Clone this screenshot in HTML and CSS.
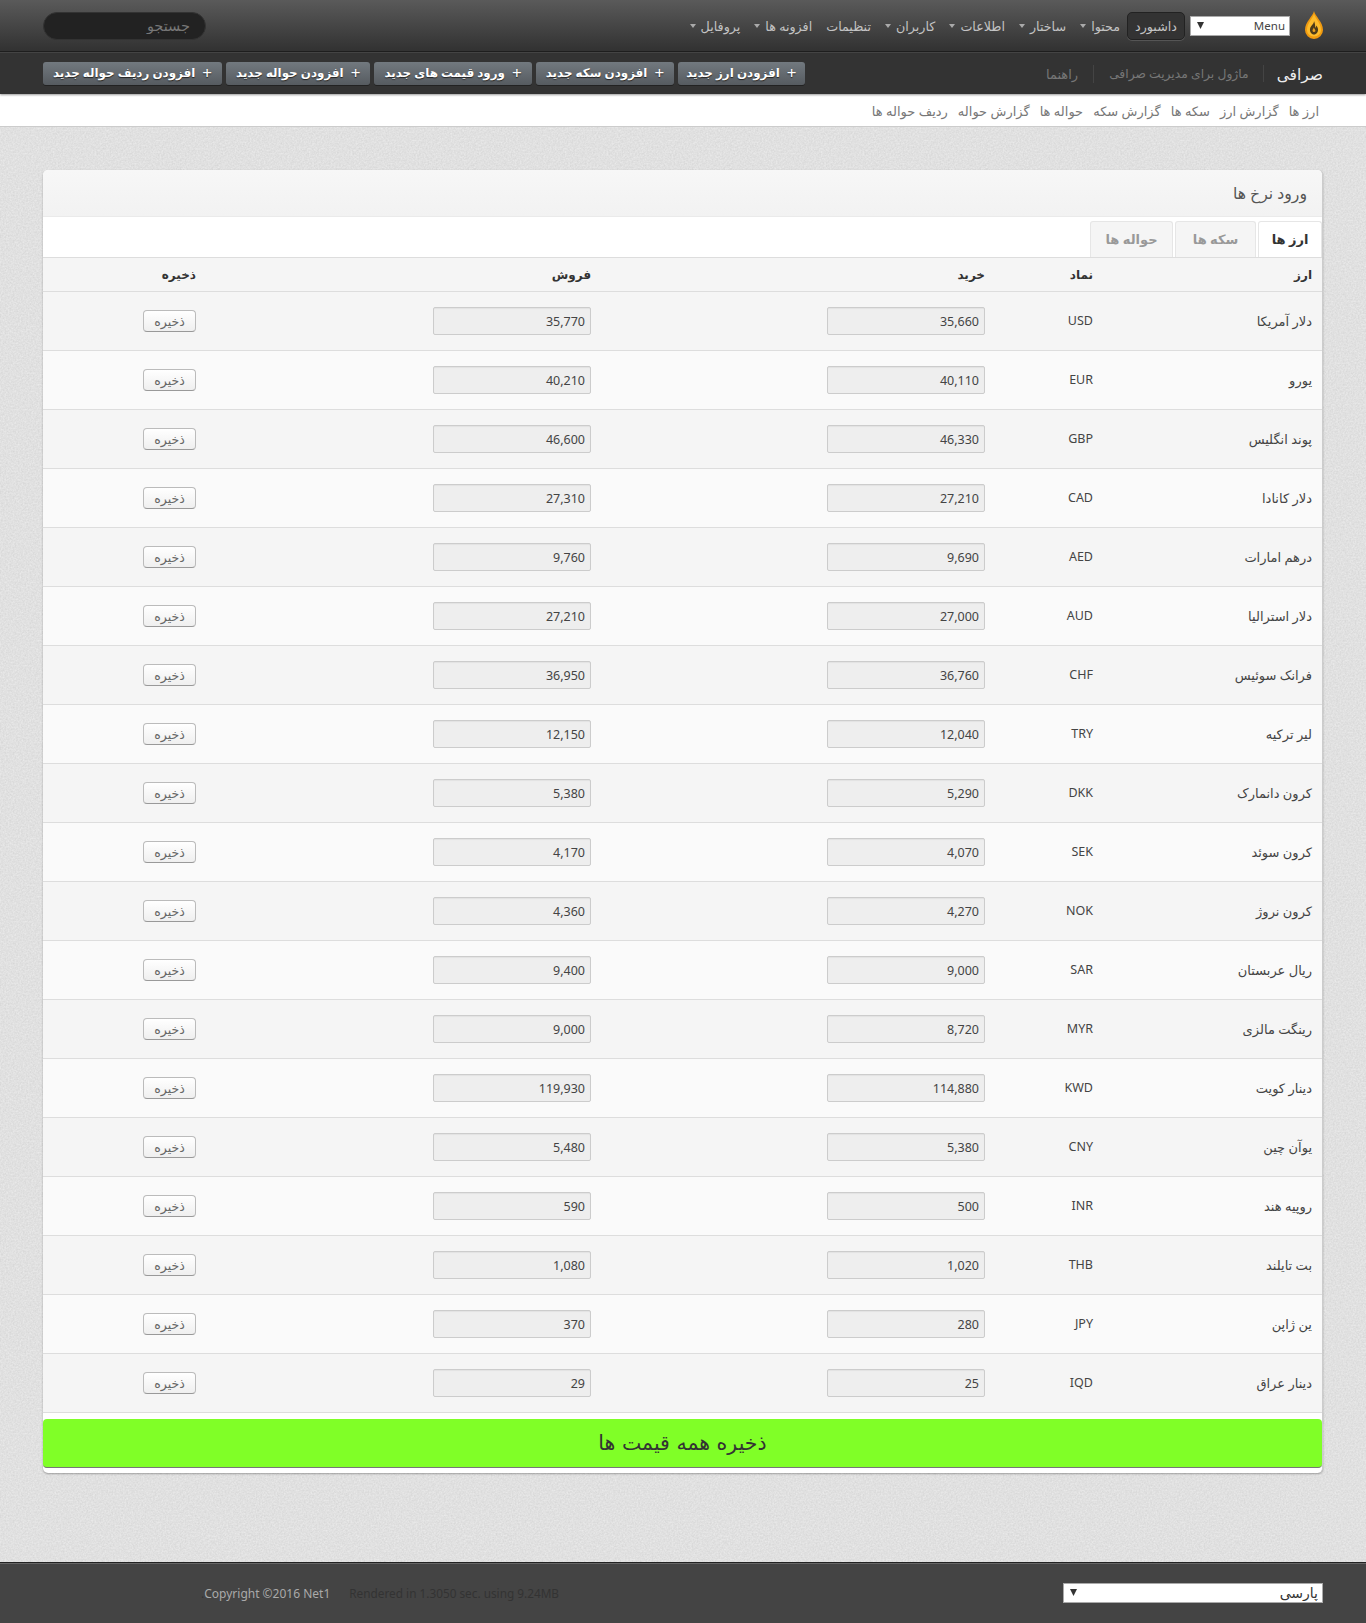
FILE: index.html
```html
<!DOCTYPE html>
<html lang="fa" dir="rtl">
<head>
<meta charset="utf-8">
<title>ورود نرخ ها</title>
<link rel="stylesheet" href="styles.css">
</head>
<body>
<header class="topbar">
  <svg class="logo" viewBox="0 0 18 28" aria-hidden="true"><path d="M9 0C8 5 0 11 0 19a9 9 0 0 0 18 0C18 11 10 5 9 0z" fill="#f09a10"/><path d="M9 3C8 7 2 12 2 19c0 3.500 3 6.500 7 6.500s7-3 7-6.500C16 12 10 7 9 3z" fill="#fdbc2c"/><path d="M9 10c.3 3-3.500 4.500-4 8-.4 2.800 1.500 5.500 4 5.500s4.400-2.700 4-5.500c-.2-1.500-1-2.500-1.800-3.500 0 1.200-.4 1.800-1 2.300.2-2.500-.4-5-1.200-6.800z" fill="#4d3b1a"/><path d="M8.800 16.500c-.4 1.500-1.600 2.200-1.200 3.700.3 1.100 2.400 1.100 2.800 0 .3-1.100-1.100-2.200-1.600-3.700z" fill="#e8a020"/></svg>
  <select class="menu-select"><option>Menu</option></select>
  <nav class="mainnav">
    <a class="nav-active" href="#">داشبورد</a>
    <a class="has-caret" href="#">محتوا</a>
    <a class="has-caret" href="#">ساختار</a>
    <a class="has-caret" href="#">اطلاعات</a>
    <a class="has-caret" href="#">کاربران</a>
    <a href="#">تنظیمات</a>
    <a class="has-caret" href="#">افزونه ها</a>
    <a class="has-caret" href="#">پروفایل</a>
  </nav>
  <input class="search" type="text" placeholder="جستجو">
</header>
<div class="subbar">
  <h1 class="brand">صرافی</h1>
  <span class="tagline">ماژول برای مدیریت صرافی</span>
  <a class="help" href="#">راهنما</a>
  <div class="actions">
    <a class="action action-first" href="#"><span class="plus">+</span>افزودن ارز جدید</a>
    <a class="action" href="#"><span class="plus">+</span>افزودن سکه جدید</a>
    <a class="action" href="#"><span class="plus">+</span>ورود قیمت های جدید</a>
    <a class="action" href="#"><span class="plus">+</span>افزودن حواله جدید</a>
    <a class="action" href="#"><span class="plus">+</span>افزودن ردیف حواله جدید</a>
  </div>
</div>
<nav class="subnav">
  <a href="#">ارز ها</a>
  <a href="#">گزارش ارز</a>
  <a href="#">سکه ها</a>
  <a href="#">گزارش سکه</a>
  <a href="#">حواله ها</a>
  <a href="#">گزارش حواله</a>
  <a href="#">ردیف حواله ها</a>
</nav>
<main class="content">
  <section class="card">
    <h2 class="card-title">ورود نرخ ها</h2>
    <div class="tabs">
      <a class="tab tab-active" href="#">ارز ها</a>
      <a class="tab tab-coin" href="#">سکه ها</a>
      <a class="tab tab-remit" href="#">حواله ها</a>
    </div>
    <table class="rates">
      <colgroup><col class="c1"><col class="c2"><col class="c3"><col class="c4"><col class="c5"></colgroup>
      <thead><tr><th>ارز</th><th>نماد</th><th>خرید</th><th>فروش</th><th>ذخیره</th></tr></thead>
      <tbody>
        <tr><td>دلار آمریکا</td><td>USD</td><td><input value="35,660"></td><td><input value="35,770"></td><td><button>ذخیره</button></td></tr>
        <tr><td>یورو</td><td>EUR</td><td><input value="40,110"></td><td><input value="40,210"></td><td><button>ذخیره</button></td></tr>
        <tr><td>پوند انگلیس</td><td>GBP</td><td><input value="46,330"></td><td><input value="46,600"></td><td><button>ذخیره</button></td></tr>
        <tr><td>دلار کانادا</td><td>CAD</td><td><input value="27,210"></td><td><input value="27,310"></td><td><button>ذخیره</button></td></tr>
        <tr><td>درهم امارات</td><td>AED</td><td><input value="9,690"></td><td><input value="9,760"></td><td><button>ذخیره</button></td></tr>
        <tr><td>دلار استرالیا</td><td>AUD</td><td><input value="27,000"></td><td><input value="27,210"></td><td><button>ذخیره</button></td></tr>
        <tr><td>فرانک سوئیس</td><td>CHF</td><td><input value="36,760"></td><td><input value="36,950"></td><td><button>ذخیره</button></td></tr>
        <tr><td>لیر ترکیه</td><td>TRY</td><td><input value="12,040"></td><td><input value="12,150"></td><td><button>ذخیره</button></td></tr>
        <tr><td>کرون دانمارک</td><td>DKK</td><td><input value="5,290"></td><td><input value="5,380"></td><td><button>ذخیره</button></td></tr>
        <tr><td>کرون سوئد</td><td>SEK</td><td><input value="4,070"></td><td><input value="4,170"></td><td><button>ذخیره</button></td></tr>
        <tr><td>کرون نروژ</td><td>NOK</td><td><input value="4,270"></td><td><input value="4,360"></td><td><button>ذخیره</button></td></tr>
        <tr><td>ریال عربستان</td><td>SAR</td><td><input value="9,000"></td><td><input value="9,400"></td><td><button>ذخیره</button></td></tr>
        <tr><td>رینگت مالزی</td><td>MYR</td><td><input value="8,720"></td><td><input value="9,000"></td><td><button>ذخیره</button></td></tr>
        <tr><td>دینار کویت</td><td>KWD</td><td><input value="114,880"></td><td><input value="119,930"></td><td><button>ذخیره</button></td></tr>
        <tr><td>یوآن چین</td><td>CNY</td><td><input value="5,380"></td><td><input value="5,480"></td><td><button>ذخیره</button></td></tr>
        <tr><td>روپیه هند</td><td>INR</td><td><input value="500"></td><td><input value="590"></td><td><button>ذخیره</button></td></tr>
        <tr><td>بت تایلند</td><td>THB</td><td><input value="1,020"></td><td><input value="1,080"></td><td><button>ذخیره</button></td></tr>
        <tr><td>ین ژاپن</td><td>JPY</td><td><input value="280"></td><td><input value="370"></td><td><button>ذخیره</button></td></tr>
        <tr><td>دینار عراق</td><td>IQD</td><td><input value="25"></td><td><input value="29"></td><td><button>ذخیره</button></td></tr>
      </tbody>
    </table>
    <button class="save-all">ذخیره همه قیمت ها</button>
  </section>
</main>
<footer class="footer">
  <select class="lang-select"><option>پارسی</option></select>
  <p class="rendered">Rendered in 1.3050 sec. using 9.24MB</p>
  <p class="copyright">Copyright ©2016 Net1<span class="dot">.</span></p>
</footer>
</body>
</html>
```
FILE: styles.css
```css
* { box-sizing: border-box; }
html, body { margin: 0; padding: 0; }
body {
  width: 1366px;
  height: 1623px;
  display: flex;
  flex-direction: column;
  font-family: "Noto Sans", "DejaVu Sans", sans-serif;
  font-size: 12px;
  color: #444;
  background-color: #e1e1e1;
  background-image: url("data:image/svg+xml,%3Csvg xmlns='http://www.w3.org/2000/svg' width='256' height='256'%3E%3Cfilter id='n' color-interpolation-filters='sRGB'%3E%3CfeTurbulence type='fractalNoise' baseFrequency='.6' numOctaves='3' stitchTiles='stitch'/%3E%3CfeColorMatrix values='.1 0 0 0 .83 .1 0 0 0 .83 .1 0 0 0 .83 0 0 0 0 1'/%3E%3C/filter%3E%3Crect width='256' height='256' filter='url(%23n)'/%3E%3C/svg%3E");
}
a { color: inherit; text-decoration: none; }

.topbar {
  height: 52px;
  flex: none;
  display: flex;
  align-items: center;
  padding: 0 43px;
  background: linear-gradient(#5a5a5a, #333 96%);
  border-bottom: 1px solid #1f1f1f;
}
.logo { width: 18px; height: 28px; flex: none; margin-top: -2px; }
.menu-select {
  width: 100px;
  height: 20px;
  margin-right: 15px;
  flex: none;
  appearance: none;
  border: 1px solid #aaa;
  border-radius: 0;
  padding: 0 4px;
  font: 11.500px "Noto Sans", sans-serif;
  color: #444;
  background: #fff url("data:image/svg+xml,%3Csvg xmlns='http://www.w3.org/2000/svg' width='8' height='7'%3E%3Cpath d='M0 0h7L3.500 7z' fill='%23333'/%3E%3C/svg%3E") no-repeat 6px 5px;
}
.mainnav {
  display: flex;
  align-items: center;
  margin-right: 5px;
  color: #c4c4c4;
  font-size: 12.700px;
}
.mainnav a { display: flex; align-items: center; margin-left: 14px; white-space: nowrap; }
.mainnav .nav-active {
  height: 28px;
  padding: 0 7px;
  margin-left: 7px;
  background: #333;
  border: 1px solid #222;
  border-radius: 5px;
  box-shadow: 0 1px 0 #555;
}
.has-caret::after {
  content: "";
  margin-right: 5px;
  border-top: 4px solid #aaa;
  border-left: 3px solid transparent;
  border-right: 3px solid transparent;
}
.search {
  width: 163px;
  height: 28px;
  margin-right: auto;
  flex: none;
  border: 1px solid #333;
  border-radius: 14px;
  padding: 0 15px;
  background: #222;
  color: #888;
  font: 14.500px "DejaVu Sans", sans-serif;
  outline: 0;
}
.search::placeholder { color: #777; opacity: 1; }

.subbar {
  height: 42px;
  flex: none;
  display: flex;
  align-items: center;
  padding: 0 43px;
  background: #333;
  border-top: 1px solid #444;
  box-shadow: 0 1px 2px rgba(0,0,0,.4);
  position: relative;
}
.brand { margin: 0; font-size: 15.500px; font-weight: 400; color: #eee; }
.tagline { margin-right: 13px; padding-right: 14px; border-right: 1px solid #444; color: #777; font-size: 12.300px; }
.help { margin-right: 15px; padding-right: 15px; border-right: 1px solid #444; color: #777; font-size: 13px; }
.actions { display: flex; gap: 4px; margin-right: auto; }
.action {
  height: 23px;
  padding: 0 10px 3px;
  display: flex;
  align-items: center;
  border-radius: 3px;
  background: linear-gradient(#72797f, #565b60);
  box-shadow: 0 1px 0 #222;
  color: #fff;
  font-size: 11.900px;
  font-weight: 700;
  text-shadow: 0 1px 1px #222;
  white-space: nowrap;
}
.action-first { padding: 0 8px 3px; }
.plus { font-size: 17px; font-weight: 400; margin-left: 7px; line-height: 1; }

.subnav {
  height: 33px;
  flex: none;
  display: flex;
  align-items: center;
  gap: 10px;
  padding: 2px 47px 0 0;
  background: #fff;
  border-bottom: 1px solid #ccc;
  color: #777;
  font-size: 13px;
}
.content { flex: 1; padding: 43px 43px 0; }
.card {
  height: 1303px;
  background: #fff;
  border-radius: 5px;
  box-shadow: 0 1px 2px rgba(0,0,0,.3);
  border-right: 1px solid #ccc;
}
.card-title {
  height: 47px;
  margin: 0;
  padding: 0 15px;
  display: flex;
  align-items: center;
  font-size: 15.700px;
  font-weight: 400;
  color: #555;
  background: linear-gradient(#f7f7f7, #f2f2f2);
  border-bottom: 1px solid #eaeaea;
  border-radius: 5px 5px 0 0;
}
.tabs {
  height: 41px;
  padding-top: 4px;
  display: flex;
  gap: 2px;
  border-bottom: 1px solid #ddd;
  background: #fff;
}
.tab {
  height: 36px;
  padding-bottom: 2px;
  display: flex;
  align-items: center;
  justify-content: center;
  background: #f5f5f5;
  border: 1px solid #e6e6e6;
  border-bottom: 0;
  border-radius: 3px 3px 0 0;
  color: #999;
  font-size: 13px;
  font-weight: 700;
}
.tab-active { width: 64px; background: #fff; color: #333; }
.tab-coin { width: 81px; }
.tab-remit { width: 83px; }

.rates { width: 100%; table-layout: fixed; border-collapse: collapse; }
.c1 { width: 219px; }
.c2 { width: 108px; }
.c3 { width: 394px; }
.c4 { width: 395px; }
.rates th {
  height: 33px;
  padding: 0 10px;
  text-align: right;
  font-size: 12px;
  color: #333;
  background: #f5f5f5;
  border-bottom: 1px solid #ddd;
}
.rates td {
  height: 59px;
  padding: 0 10px;
  text-align: right;
  border-bottom: 1px solid #ddd;
  background: #f5f5f5;
  color: #444;
}
.rates td:first-child { font-size: 13px; }
.rates td:nth-child(2) { font-size: 12.500px; }
.rates tr:nth-child(even) td { background: #fafafa; }
.rates input {
  display: block;
  width: 158px;
  height: 28px;
  padding: 2px 5px 0;
  text-align: right;
  background: #eee;
  border: 1px solid #ccc;
  border-radius: 2px;
  box-shadow: inset 0 1px 1px rgba(0,0,0,.05);
  font: 12.500px "Noto Sans", sans-serif;
  color: #444;
}
.rates button {
  display: block;
  width: 53px;
  height: 22px;
  padding: 2px 0 0;
  background: linear-gradient(#fff, #efefef);
  border: 1px solid #bbb;
  border-bottom-color: #999;
  border-radius: 4px;
  color: #666;
  font: 12.500px "DejaVu Sans", sans-serif;
}
.save-all {
  display: block;
  width: 100%;
  height: 49px;
  margin-top: 6px;
  padding: 0;
  background: #80ff27;
  border: 0;
  border-bottom: 1px solid #777;
  border-radius: 4px;
  color: #333;
  font: 20.500px "DejaVu Sans", sans-serif;
}

.footer {
  height: 61px;
  flex: none;
  display: flex;
  align-items: center;
  padding: 0 43px;
  background: #444;
  border-top: 1px solid #222;
  box-shadow: inset 0 1px 0 #666;
  font-size: 11.800px;
}
.lang-select {
  width: 260px;
  height: 20px;
  flex: none;
  appearance: none;
  border: 1px solid #aaa;
  border-radius: 0;
  padding: 0 4px;
  font: 14px "DejaVu Sans", sans-serif;
  color: #333;
  background: #fff url("data:image/svg+xml,%3Csvg xmlns='http://www.w3.org/2000/svg' width='8' height='7'%3E%3Cpath d='M0 0h7L3.500 7z' fill='%23333'/%3E%3C/svg%3E") no-repeat 6px 5px;
}
.rendered { margin: 0 0 0 19px; margin-right: auto; color: #333; direction: ltr; }
.copyright { margin: 0 0 0 158px; color: #aaa; direction: rtl; font-size: 12px; }
.dot { color: #333; }
```
